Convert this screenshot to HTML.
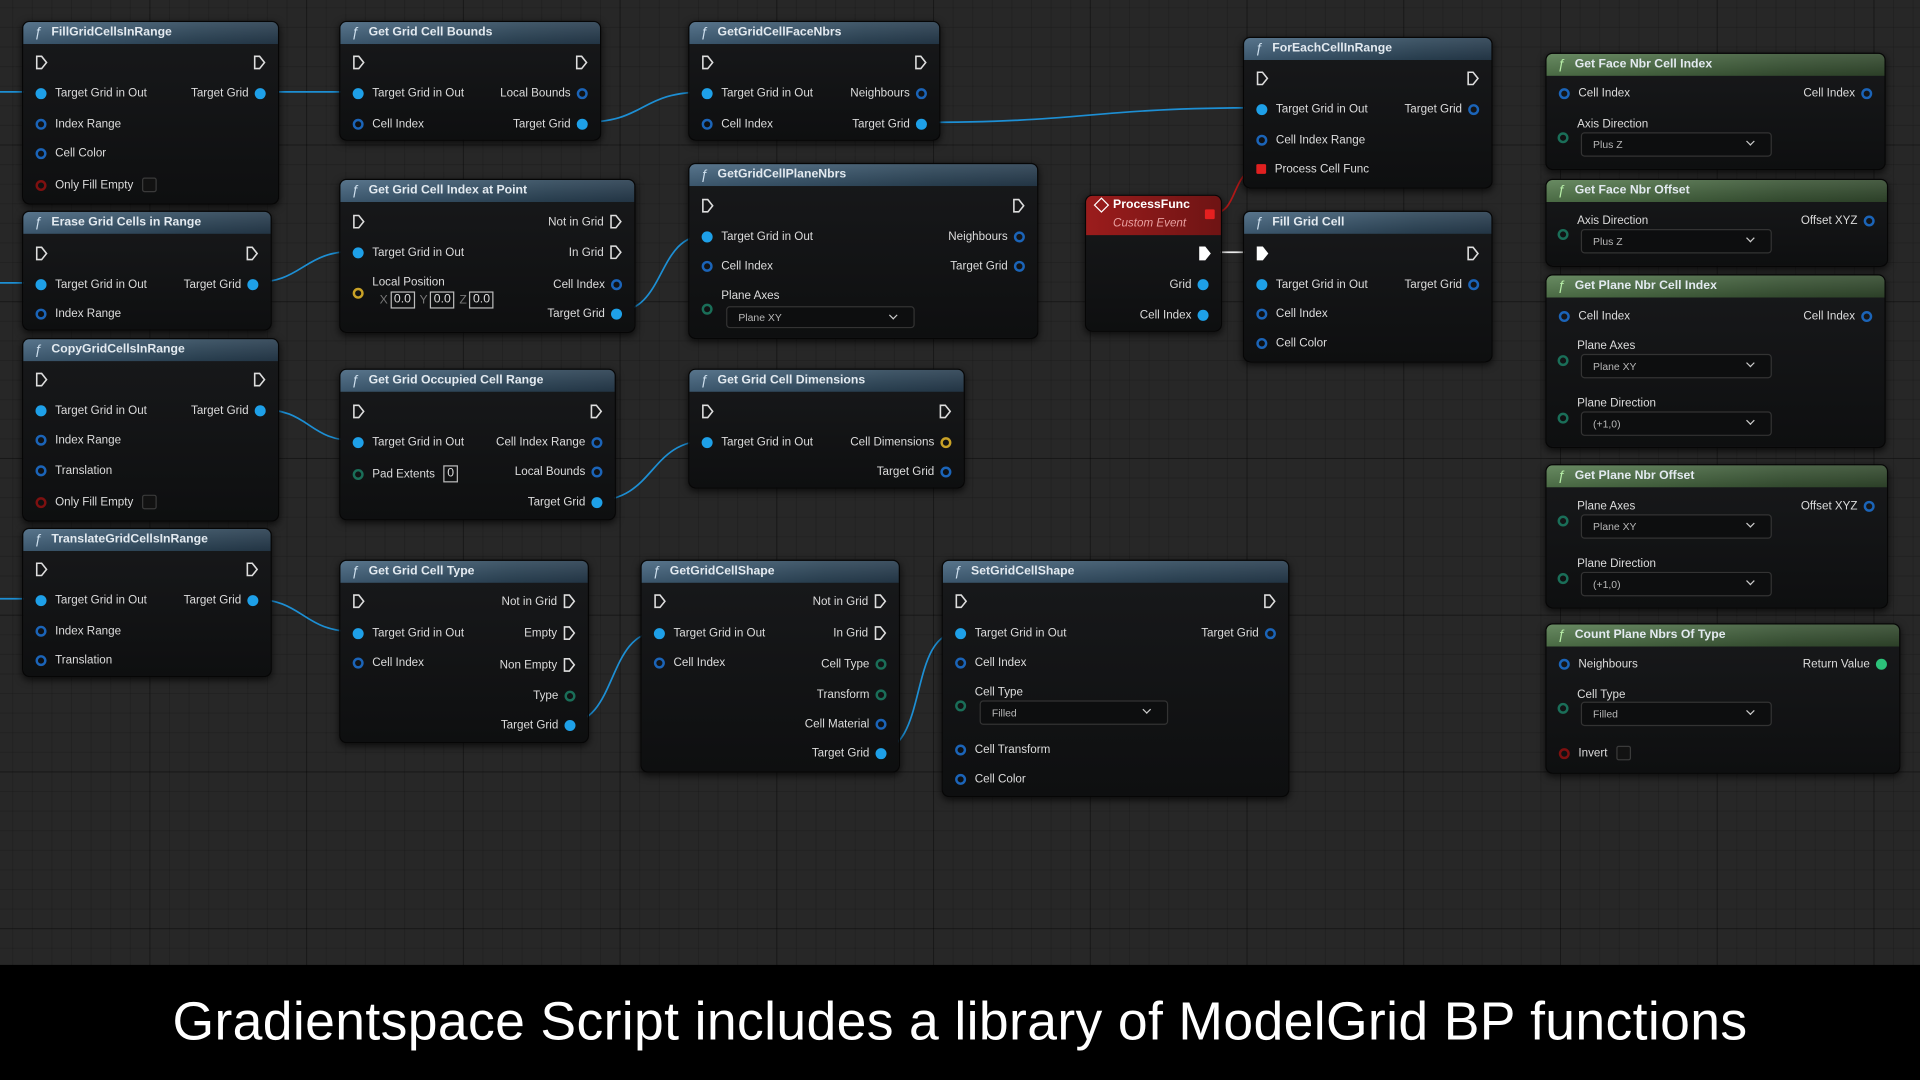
<!DOCTYPE html>
<html><head><meta charset="utf-8"><style>
html,body{margin:0;padding:0;width:1920px;height:1080px;overflow:hidden;background:#262626}
#s{position:absolute;left:0;top:0;width:1568px;height:882px;transform:scale(1.22449);transform-origin:0 0;font-family:"Liberation Sans",sans-serif;
background-color:#272727;
background-image:linear-gradient(90deg,rgba(0,0,0,.3) 1px,transparent 1px),linear-gradient(rgba(0,0,0,.3) 1px,transparent 1px),linear-gradient(90deg,rgba(0,0,0,.13) 1px,transparent 1px),linear-gradient(rgba(0,0,0,.13) 1px,transparent 1px);
background-size:128px 128px,128px 128px,16px 16px,16px 16px;background-position:-6px -10px}
svg.w{position:absolute;left:0;top:0}
.n{position:absolute;background:linear-gradient(#18191b,#0e0f10);border:1px solid #060606;border-radius:6px;box-shadow:0 2px 6px rgba(0,0,0,.7);color:#dcdcdc;font-size:9.5px}
.h{height:18px;border-radius:5px 5px 0 0;background:linear-gradient(180deg,rgba(255,255,255,.1),rgba(0,0,0,.15)),linear-gradient(90deg,#45657f,#2d4659 70%,#283d4f);color:#e3eaf0;font-weight:bold;font-size:10px;line-height:18px;padding-left:23px;position:relative;white-space:nowrap}
.h.g{background:linear-gradient(180deg,rgba(255,255,255,.1),rgba(0,0,0,.15)),linear-gradient(90deg,#577d50,#3a5535 70%,#334a2e)}
.h:before{content:"ƒ";position:absolute;left:9px;top:0;font-style:italic;font-weight:normal;color:#cfe0ee;font-size:11px}
.h.g:before{color:#b8f0a8}
.L,.R{position:absolute;display:flex;align-items:center;height:14px;white-space:nowrap}
.L{left:10px;gap:7px}.R{right:10px;gap:5px}
i{display:inline-block;width:9px;height:9px;border-radius:50%;box-sizing:border-box;flex:none}
.pf{background:#1ea0e8}
.ph{border:2px solid #1b64b8}
.pg{border:2px solid #1a6e58}
.pgf{background:#2cc27a}
.py{border:2px solid #c9a227}
.pr{border:2px solid #7e1010}
.ps{width:8px;height:8px;border-radius:1px;background:#e02020}
.x{width:10px;height:12px;flex:none}
.cb{width:12px;height:12px;border:1px solid #3a3a3a;background:#121212;border-radius:2px;box-sizing:border-box;display:inline-block}
.dd{position:absolute;height:18px;border:1px solid #333;background:#0d0e0f;border-radius:3px;box-sizing:border-box;color:#b8b8b8;font-size:8.5px;line-height:16px;padding-left:9px}
.dd:after{content:"";position:absolute;right:14px;top:4px;width:4px;height:4px;border-right:1.3px solid #ccc;border-bottom:1.3px solid #ccc;transform:rotate(45deg)}
.ab{position:absolute}
.bx{display:inline-block;border:1px solid #bbb;padding:0 2px;line-height:12px;color:#ddd;font-size:10px}
.xl{color:#777;font-size:10px;margin:0 2px 0 4px}
#cap{position:absolute;left:0;top:788px;width:1568px;height:94px;background:#000;color:#fff;font-size:43.7px;text-align:center;line-height:94px;font-family:"Liberation Sans",sans-serif;letter-spacing:.3px}
</style></head><body><div id="s">
<svg class="w" width="1568" height="882" fill="none" stroke="#1d8fd4" stroke-width="1.4">
<path d="M0 75H30M0 231H30M0 489H30"/>
<path d="M210 75H292"/>
<path d="M474 100C530 100 520 75 577 75"/>
<path d="M749 100C890 100 890 88 1030 88"/>
<path d="M204 231C250 231 245 205 292 205"/>
<path d="M210 334C255 334 250 360 292 360"/>
<path d="M204 489C250 489 245 516 292 516"/>
<path d="M501 255C545 255 535 192 577 192"/>
<path d="M485 409C535 409 530 360 577 360"/>
<path d="M462 591C505 591 495 516 538 516"/>
<path d="M715 614C760 614 740 516 784 516"/>
<path d="M984 206H1030" stroke="#eee"/>
<path d="M1030 137C1005 137 1012 174 991 174" stroke="#b01818"/>
</svg>

<div class="n" style="left:18px;top:17px;width:208px;height:148px"><div class="h">FillGridCellsInRange</div>
<div class="L" style="top:26px"><svg class="x" viewBox="0 0 10 12"><path d="M1 1H5L9 6 5 11H1Z" stroke="#ddd" fill="none" stroke-width="1.3"/></svg></div>
<div class="R" style="top:26px"><svg class="x" viewBox="0 0 10 12"><path d="M1 1H5L9 6 5 11H1Z" stroke="#ddd" fill="none" stroke-width="1.3"/></svg></div>
<div class="L" style="top:51px"><i class="pf"></i>Target Grid in Out</div><div class="R" style="top:51px">Target Grid<i class="pf"></i></div>
<div class="L" style="top:76px"><i class="ph"></i>Index Range</div>
<div class="L" style="top:100px"><i class="ph"></i>Cell Color</div>
<div class="L" style="top:126px"><i class="pr"></i>Only Fill Empty <span class="cb"></span></div></div>

<div class="n" style="left:18px;top:172px;width:202px;height:96px"><div class="h">Erase Grid Cells in Range</div>
<div class="L" style="top:27px"><svg class="x" viewBox="0 0 10 12"><path d="M1 1H5L9 6 5 11H1Z" stroke="#ddd" fill="none" stroke-width="1.3"/></svg></div>
<div class="R" style="top:27px"><svg class="x" viewBox="0 0 10 12"><path d="M1 1H5L9 6 5 11H1Z" stroke="#ddd" fill="none" stroke-width="1.3"/></svg></div>
<div class="L" style="top:52px"><i class="pf"></i>Target Grid in Out</div><div class="R" style="top:52px">Target Grid<i class="pf"></i></div>
<div class="L" style="top:76px"><i class="ph"></i>Index Range</div></div>

<div class="n" style="left:18px;top:276px;width:208px;height:148px"><div class="h">CopyGridCellsInRange</div>
<div class="L" style="top:26px"><svg class="x" viewBox="0 0 10 12"><path d="M1 1H5L9 6 5 11H1Z" stroke="#ddd" fill="none" stroke-width="1.3"/></svg></div>
<div class="R" style="top:26px"><svg class="x" viewBox="0 0 10 12"><path d="M1 1H5L9 6 5 11H1Z" stroke="#ddd" fill="none" stroke-width="1.3"/></svg></div>
<div class="L" style="top:51px"><i class="pf"></i>Target Grid in Out</div><div class="R" style="top:51px">Target Grid<i class="pf"></i></div>
<div class="L" style="top:75px"><i class="ph"></i>Index Range</div>
<div class="L" style="top:100px"><i class="ph"></i>Translation</div>
<div class="L" style="top:126px"><i class="pr"></i>Only Fill Empty <span class="cb"></span></div></div>

<div class="n" style="left:18px;top:431px;width:202px;height:120px"><div class="h">TranslateGridCellsInRange</div>
<div class="L" style="top:26px"><svg class="x" viewBox="0 0 10 12"><path d="M1 1H5L9 6 5 11H1Z" stroke="#ddd" fill="none" stroke-width="1.3"/></svg></div>
<div class="R" style="top:26px"><svg class="x" viewBox="0 0 10 12"><path d="M1 1H5L9 6 5 11H1Z" stroke="#ddd" fill="none" stroke-width="1.3"/></svg></div>
<div class="L" style="top:51px"><i class="pf"></i>Target Grid in Out</div><div class="R" style="top:51px">Target Grid<i class="pf"></i></div>
<div class="L" style="top:76px"><i class="ph"></i>Index Range</div>
<div class="L" style="top:100px"><i class="ph"></i>Translation</div></div>

<div class="n" style="left:277px;top:17px;width:212px;height:96px"><div class="h">Get Grid Cell Bounds</div>
<div class="L" style="top:26px"><svg class="x" viewBox="0 0 10 12"><path d="M1 1H5L9 6 5 11H1Z" stroke="#ddd" fill="none" stroke-width="1.3"/></svg></div>
<div class="R" style="top:26px"><svg class="x" viewBox="0 0 10 12"><path d="M1 1H5L9 6 5 11H1Z" stroke="#ddd" fill="none" stroke-width="1.3"/></svg></div>
<div class="L" style="top:51px"><i class="pf"></i>Target Grid in Out</div><div class="R" style="top:51px">Local Bounds<i class="ph"></i></div>
<div class="L" style="top:76px"><i class="ph"></i>Cell Index</div><div class="R" style="top:76px">Target Grid<i class="pf"></i></div></div>

<div class="n" style="left:277px;top:146px;width:240px;height:124px"><div class="h">Get Grid Cell Index at Point</div>
<div class="L" style="top:27px"><svg class="x" viewBox="0 0 10 12"><path d="M1 1H5L9 6 5 11H1Z" stroke="#ddd" fill="none" stroke-width="1.3"/></svg></div>
<div class="R" style="top:27px">Not in Grid<svg class="x" viewBox="0 0 10 12"><path d="M1 1H5L9 6 5 11H1Z" stroke="#ddd" fill="none" stroke-width="1.3"/></svg></div>
<div class="L" style="top:52px"><i class="pf"></i>Target Grid in Out</div><div class="R" style="top:52px">In Grid<svg class="x" viewBox="0 0 10 12"><path d="M1 1H5L9 6 5 11H1Z" stroke="#ddd" fill="none" stroke-width="1.3"/></svg></div>
<div class="L" style="top:76px;left:26px">Local Position</div>
<i class="py ab" style="left:10px;top:88px"></i>
<div class="L" style="top:91px;left:28px;gap:0"><span class="xl">X</span><span class="bx">0.0</span><span class="xl">Y</span><span class="bx">0.0</span><span class="xl">Z</span><span class="bx">0.0</span></div>
<div class="R" style="top:78px">Cell Index<i class="ph"></i></div>
<div class="R" style="top:102px">Target Grid<i class="pf"></i></div></div>

<div class="n" style="left:277px;top:301px;width:224px;height:122px"><div class="h">Get Grid Occupied Cell Range</div>
<div class="L" style="top:27px"><svg class="x" viewBox="0 0 10 12"><path d="M1 1H5L9 6 5 11H1Z" stroke="#ddd" fill="none" stroke-width="1.3"/></svg></div>
<div class="R" style="top:27px"><svg class="x" viewBox="0 0 10 12"><path d="M1 1H5L9 6 5 11H1Z" stroke="#ddd" fill="none" stroke-width="1.3"/></svg></div>
<div class="L" style="top:52px"><i class="pf"></i>Target Grid in Out</div><div class="R" style="top:52px">Cell Index Range<i class="ph"></i></div>
<div class="L" style="top:78px"><i class="pg"></i>Pad Extents <span class="bx">0</span></div><div class="R" style="top:76px">Local Bounds<i class="ph"></i></div>
<div class="R" style="top:101px">Target Grid<i class="pf"></i></div></div>

<div class="n" style="left:277px;top:457px;width:202px;height:148px"><div class="h">Get Grid Cell Type</div>
<div class="L" style="top:26px"><svg class="x" viewBox="0 0 10 12"><path d="M1 1H5L9 6 5 11H1Z" stroke="#ddd" fill="none" stroke-width="1.3"/></svg></div>
<div class="R" style="top:26px">Not in Grid<svg class="x" viewBox="0 0 10 12"><path d="M1 1H5L9 6 5 11H1Z" stroke="#ddd" fill="none" stroke-width="1.3"/></svg></div>
<div class="L" style="top:52px"><i class="pf"></i>Target Grid in Out</div><div class="R" style="top:52px">Empty<svg class="x" viewBox="0 0 10 12"><path d="M1 1H5L9 6 5 11H1Z" stroke="#ddd" fill="none" stroke-width="1.3"/></svg></div>
<div class="L" style="top:76px"><i class="ph"></i>Cell Index</div><div class="R" style="top:78px">Non Empty<svg class="x" viewBox="0 0 10 12"><path d="M1 1H5L9 6 5 11H1Z" stroke="#ddd" fill="none" stroke-width="1.3"/></svg></div>
<div class="R" style="top:103px">Type<i class="pg"></i></div>
<div class="R" style="top:127px">Target Grid<i class="pf"></i></div></div>

<div class="n" style="left:562px;top:17px;width:204px;height:96px"><div class="h">GetGridCellFaceNbrs</div>
<div class="L" style="top:26px"><svg class="x" viewBox="0 0 10 12"><path d="M1 1H5L9 6 5 11H1Z" stroke="#ddd" fill="none" stroke-width="1.3"/></svg></div>
<div class="R" style="top:26px"><svg class="x" viewBox="0 0 10 12"><path d="M1 1H5L9 6 5 11H1Z" stroke="#ddd" fill="none" stroke-width="1.3"/></svg></div>
<div class="L" style="top:51px"><i class="pf"></i>Target Grid in Out</div><div class="R" style="top:51px">Neighbours<i class="ph"></i></div>
<div class="L" style="top:76px"><i class="ph"></i>Cell Index</div><div class="R" style="top:76px">Target Grid<i class="pf"></i></div></div>

<div class="n" style="left:562px;top:133px;width:284px;height:142px"><div class="h">GetGridCellPlaneNbrs</div>
<div class="L" style="top:27px"><svg class="x" viewBox="0 0 10 12"><path d="M1 1H5L9 6 5 11H1Z" stroke="#ddd" fill="none" stroke-width="1.3"/></svg></div>
<div class="R" style="top:27px"><svg class="x" viewBox="0 0 10 12"><path d="M1 1H5L9 6 5 11H1Z" stroke="#ddd" fill="none" stroke-width="1.3"/></svg></div>
<div class="L" style="top:52px"><i class="pf"></i>Target Grid in Out</div><div class="R" style="top:52px">Neighbours<i class="ph"></i></div>
<div class="L" style="top:76px"><i class="ph"></i>Cell Index</div><div class="R" style="top:76px">Target Grid<i class="ph"></i></div>
<div class="L" style="top:100px;left:26px">Plane Axes</div><i class="pg ab" style="left:10px;top:114px"></i>
<div class="dd" style="left:30px;top:116px;width:154px">Plane XY</div></div>

<div class="n" style="left:562px;top:301px;width:224px;height:96px"><div class="h">Get Grid Cell Dimensions</div>
<div class="L" style="top:27px"><svg class="x" viewBox="0 0 10 12"><path d="M1 1H5L9 6 5 11H1Z" stroke="#ddd" fill="none" stroke-width="1.3"/></svg></div>
<div class="R" style="top:27px"><svg class="x" viewBox="0 0 10 12"><path d="M1 1H5L9 6 5 11H1Z" stroke="#ddd" fill="none" stroke-width="1.3"/></svg></div>
<div class="L" style="top:52px"><i class="pf"></i>Target Grid in Out</div><div class="R" style="top:52px">Cell Dimensions<i class="py"></i></div>
<div class="R" style="top:76px">Target Grid<i class="ph"></i></div></div>

<div class="n" style="left:523px;top:457px;width:210px;height:172px"><div class="h">GetGridCellShape</div>
<div class="L" style="top:26px"><svg class="x" viewBox="0 0 10 12"><path d="M1 1H5L9 6 5 11H1Z" stroke="#ddd" fill="none" stroke-width="1.3"/></svg></div>
<div class="R" style="top:26px">Not in Grid<svg class="x" viewBox="0 0 10 12"><path d="M1 1H5L9 6 5 11H1Z" stroke="#ddd" fill="none" stroke-width="1.3"/></svg></div>
<div class="L" style="top:52px"><i class="pf"></i>Target Grid in Out</div><div class="R" style="top:52px">In Grid<svg class="x" viewBox="0 0 10 12"><path d="M1 1H5L9 6 5 11H1Z" stroke="#ddd" fill="none" stroke-width="1.3"/></svg></div>
<div class="L" style="top:76px"><i class="ph"></i>Cell Index</div><div class="R" style="top:77px">Cell Type<i class="pg"></i></div>
<div class="R" style="top:102px">Transform<i class="pg"></i></div>
<div class="R" style="top:126px">Cell Material<i class="ph"></i></div>
<div class="R" style="top:150px">Target Grid<i class="pf"></i></div></div>

<div class="n" style="left:769px;top:457px;width:282px;height:192px"><div class="h">SetGridCellShape</div>
<div class="L" style="top:26px"><svg class="x" viewBox="0 0 10 12"><path d="M1 1H5L9 6 5 11H1Z" stroke="#ddd" fill="none" stroke-width="1.3"/></svg></div>
<div class="R" style="top:26px"><svg class="x" viewBox="0 0 10 12"><path d="M1 1H5L9 6 5 11H1Z" stroke="#ddd" fill="none" stroke-width="1.3"/></svg></div>
<div class="L" style="top:52px"><i class="pf"></i>Target Grid in Out</div><div class="R" style="top:52px">Target Grid<i class="ph"></i></div>
<div class="L" style="top:76px"><i class="ph"></i>Cell Index</div>
<div class="L" style="top:100px;left:26px">Cell Type</div><i class="pg ab" style="left:10px;top:114px"></i>
<div class="dd" style="left:30px;top:114px;width:154px;height:20px;line-height:18px">Filled</div>
<div class="L" style="top:147px"><i class="ph"></i>Cell Transform</div>
<div class="L" style="top:171px"><i class="ph"></i>Cell Color</div></div>

<div class="n" style="left:886px;top:159px;width:110px;height:110px">
<div style="height:32px;border-radius:5px 5px 0 0;background:linear-gradient(90deg,#9b1c1c,#6e1414);position:relative">
<div style="position:absolute;left:8px;top:3px;width:7px;height:7px;border:1.5px solid #fff;transform:rotate(45deg)"></div>
<div style="position:absolute;left:22px;top:2px;color:#fff;font-weight:bold;font-size:10px">ProcessFunc</div>
<div style="position:absolute;left:22px;top:17px;color:#e8a0a0;font-style:italic;font-size:9.5px">Custom Event</div>
<div style="position:absolute;left:97px;top:11px;width:8px;height:8px;background:#e52020;border-radius:1px"></div></div>
<div class="R" style="top:40px;right:8px"><svg class="x" viewBox="0 0 10 12"><path d="M1 1H5L9 6 5 11H1Z" stroke="#fff" fill="#fff" stroke-width="1.3"/></svg></div>
<div class="R" style="top:65px">Grid<i class="pf"></i></div>
<div class="R" style="top:90px">Cell Index<i class="pf"></i></div></div>

<div class="n" style="left:1015px;top:30px;width:202px;height:122px"><div class="h">ForEachCellInRange</div>
<div class="L" style="top:26px"><svg class="x" viewBox="0 0 10 12"><path d="M1 1H5L9 6 5 11H1Z" stroke="#ddd" fill="none" stroke-width="1.3"/></svg></div>
<div class="R" style="top:26px"><svg class="x" viewBox="0 0 10 12"><path d="M1 1H5L9 6 5 11H1Z" stroke="#ddd" fill="none" stroke-width="1.3"/></svg></div>
<div class="L" style="top:51px"><i class="pf"></i>Target Grid in Out</div><div class="R" style="top:51px">Target Grid<i class="ph"></i></div>
<div class="L" style="top:76px"><i class="ph"></i>Cell Index Range</div>
<div class="L" style="top:100px"><i class="ps"></i>Process Cell Func</div></div>

<div class="n" style="left:1015px;top:172px;width:202px;height:122px"><div class="h">Fill Grid Cell</div>
<div class="L" style="top:27px"><svg class="x" viewBox="0 0 10 12"><path d="M1 1H5L9 6 5 11H1Z" stroke="#fff" fill="#fff" stroke-width="1.3"/></svg></div>
<div class="R" style="top:27px"><svg class="x" viewBox="0 0 10 12"><path d="M1 1H5L9 6 5 11H1Z" stroke="#ddd" fill="none" stroke-width="1.3"/></svg></div>
<div class="L" style="top:52px"><i class="pf"></i>Target Grid in Out</div><div class="R" style="top:52px">Target Grid<i class="ph"></i></div>
<div class="L" style="top:76px"><i class="ph"></i>Cell Index</div>
<div class="L" style="top:100px"><i class="ph"></i>Cell Color</div></div>

<div class="n" style="left:1262px;top:43px;width:276px;height:94px"><div class="h g">Get Face Nbr Cell Index</div>
<div class="L" style="top:25px"><i class="ph"></i>Cell Index</div><div class="R" style="top:25px">Cell Index<i class="ph"></i></div>
<div class="L" style="top:50px;left:25px">Axis Direction</div><i class="pg ab" style="left:9px;top:64px"></i>
<div class="dd" style="left:28px;top:64px;width:156px;height:20px;line-height:18px">Plus Z</div></div>

<div class="n" style="left:1262px;top:146px;width:278px;height:70px"><div class="h g">Get Face Nbr Offset</div>
<div class="L" style="top:26px;left:25px">Axis Direction</div><div class="R" style="top:26px">Offset XYZ<i class="ph"></i></div>
<i class="pg ab" style="left:9px;top:40px"></i>
<div class="dd" style="left:28px;top:40px;width:156px;height:20px;line-height:18px">Plus Z</div></div>

<div class="n" style="left:1262px;top:224px;width:276px;height:140px"><div class="h g">Get Plane Nbr Cell Index</div>
<div class="L" style="top:26px"><i class="ph"></i>Cell Index</div><div class="R" style="top:26px">Cell Index<i class="ph"></i></div>
<div class="L" style="top:50px;left:25px">Plane Axes</div><i class="pg ab" style="left:9px;top:65px"></i>
<div class="dd" style="left:28px;top:64px;width:156px;height:20px;line-height:18px">Plane XY</div>
<div class="L" style="top:97px;left:25px">Plane Direction</div><i class="pg ab" style="left:9px;top:112px"></i>
<div class="dd" style="left:28px;top:111px;width:156px;height:20px;line-height:18px">(+1,0)</div></div>

<div class="n" style="left:1262px;top:379px;width:278px;height:116px"><div class="h g">Get Plane Nbr Offset</div>
<div class="L" style="top:26px;left:25px">Plane Axes</div><div class="R" style="top:26px">Offset XYZ<i class="ph"></i></div>
<i class="pg ab" style="left:9px;top:41px"></i>
<div class="dd" style="left:28px;top:40px;width:156px;height:20px;line-height:18px">Plane XY</div>
<div class="L" style="top:73px;left:25px">Plane Direction</div><i class="pg ab" style="left:9px;top:88px"></i>
<div class="dd" style="left:28px;top:87px;width:156px;height:20px;line-height:18px">(+1,0)</div></div>

<div class="n" style="left:1262px;top:509px;width:288px;height:121px"><div class="h g">Count Plane Nbrs Of Type</div>
<div class="L" style="top:25px"><i class="ph"></i>Neighbours</div><div class="R" style="top:25px">Return Value<i class="pgf"></i></div>
<div class="L" style="top:50px;left:25px">Cell Type</div><i class="pg ab" style="left:9px;top:64px"></i>
<div class="dd" style="left:28px;top:63px;width:156px;height:20px;line-height:18px">Filled</div>
<div class="L" style="top:98px"><i class="pr"></i>Invert <span class="cb"></span></div></div>

<div id="cap">Gradientspace Script includes a library of ModelGrid BP functions</div>
</div></body></html>
